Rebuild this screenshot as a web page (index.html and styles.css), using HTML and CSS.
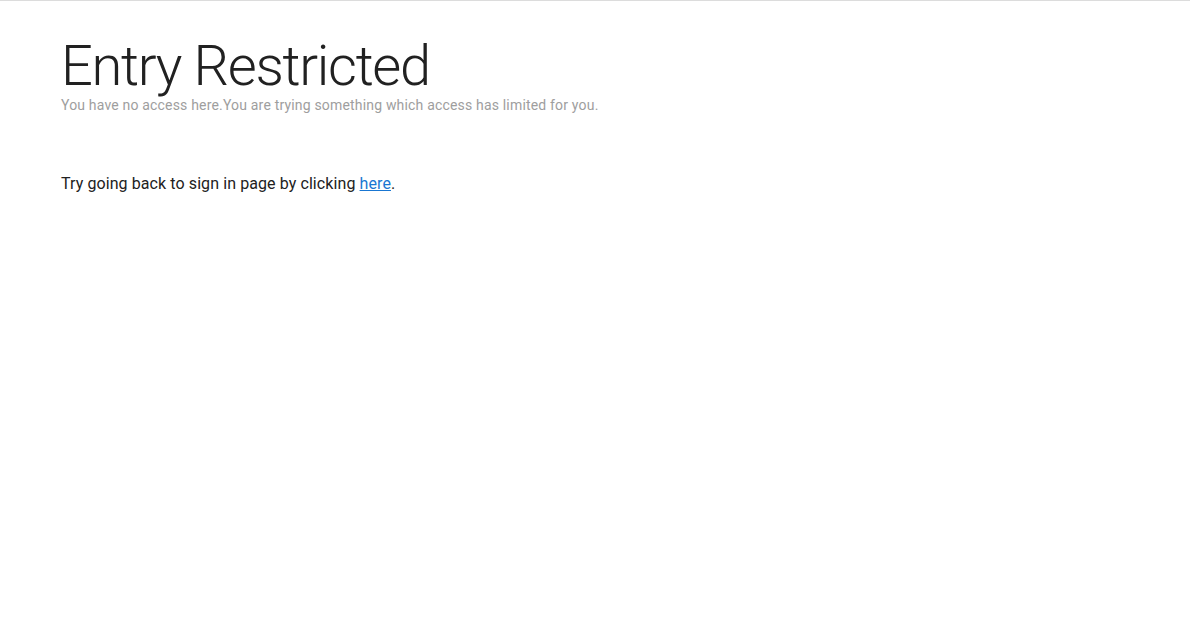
FILE: index.html
```html
<!DOCTYPE html>
<html>
<head>
<meta charset="utf-8">
<link rel="stylesheet" href="styles.css">
</head>
<body>
<div class="page">
  <h1 class="title">Entry Restricted</h1>
  <p class="subtitle">You have no access here.You are trying something which access has limited for you.</p>
  <p class="message">Try going back to sign in page by clicking <a href="#" class="link">here</a>.</p>
</div>
</body>
</html>
```
FILE: styles.css
```css
html, body {
  margin: 0;
  padding: 0;
  background: #fff;
}
body {
  border-top: 1px solid #dcdcdc;
  font-family: Roboto, "Liberation Sans", sans-serif;
  color: #212121;
}
.page {
  padding: 37px 61px 30px;
}
.title {
  margin: 0;
  font-weight: 300;
  font-size: 56px;
  line-height: 57px;
  letter-spacing: -1.3px;
  color: #212121;
}
.subtitle {
  margin: 0;
  font-size: 14px;
  line-height: 20px;
  letter-spacing: 0.18px;
  color: #9e9e9e;
}
.message {
  margin: 58px 0 0 0;
  font-size: 16px;
  line-height: 22px;
  letter-spacing: 0.09px;
  color: #212121;
}
.link {
  color: #1976d2;
  text-decoration: underline;
}
```
